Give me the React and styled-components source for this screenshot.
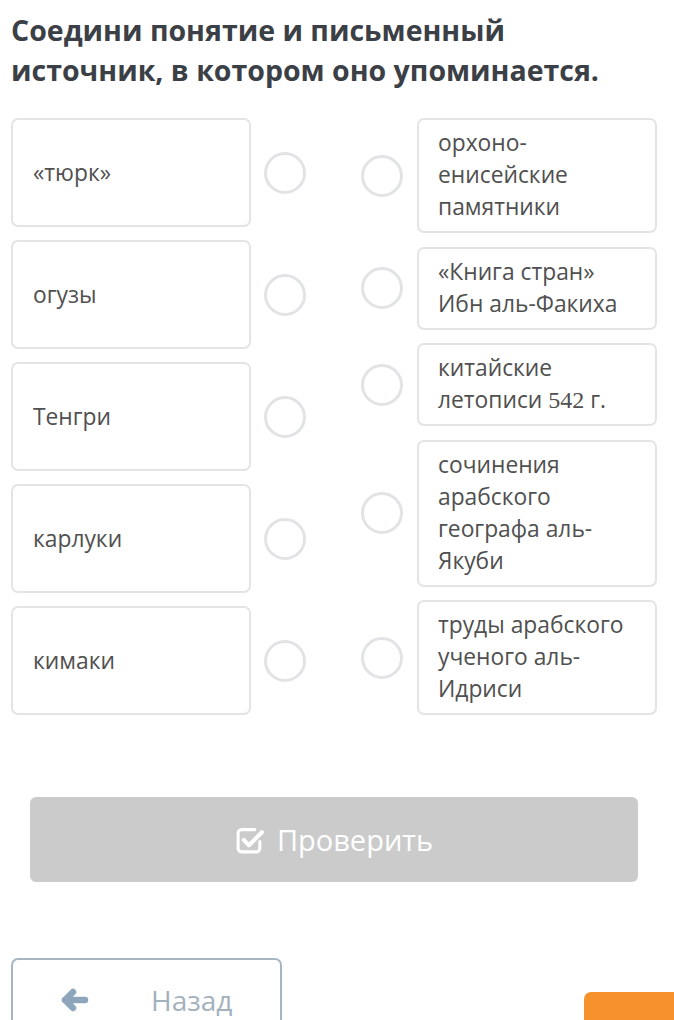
import React from "react";
import styled, { createGlobalStyle } from "styled-components";

const Global = createGlobalStyle`
  html, body { margin: 0; padding: 0; background: #fff; }
  body { font-family: "Open Sans", "Noto Sans", sans-serif; overflow: hidden; }
  * { box-sizing: border-box; }
`;

const Page = styled.div`
  width: 674px;
  height: 1020px;
  padding: 10px 0 0 11px;
  position: relative;
  overflow: hidden;
`;

const Title = styled.h1`
  margin: 0;
  font-size: 28.5px;
  line-height: 40px;
  font-weight: 700;
  color: #3b4046;
`;

const Board = styled.div`
  display: grid;
  grid-template-columns: 295px 296px;
  column-gap: 55px;
  align-items: start;
  margin-top: 28px;
`;

const Column = styled.div`
  display: flex;
  flex-direction: column;
  gap: ${(p) => (p.$right ? "13.5px" : "13px")};
`;

const Row = styled.div`
  display: flex;
  align-items: center;
  gap: ${(p) => (p.$right ? "14px" : "13px")};
`;

const Card = styled.div`
  width: 240px;
  flex: none;
  border: 2px solid #e4e4e4;
  border-radius: 7px;
  background: #fff;
  color: #505050;
  font-size: 22.8px;
  line-height: 32px;
  display: flex;
  align-items: center;
  ${(p) =>
    p.$fixed
      ? `height: 109px; padding: 0 20px;`
      : `padding: 7px 19px 8px 19px;`}
`;

const Dot = styled.div`
  width: 42px;
  height: 42px;
  flex: none;
  border: 3px solid #e1e3e5;
  border-radius: 50%;
  background: #fff;
`;

const Num = styled.span`
  font-family: "Liberation Serif", "DejaVu Serif", serif;
  font-size: 24px;
`;

const CheckButton = styled.button`
  display: flex;
  align-items: center;
  justify-content: center;
  gap: 12px;
  width: 608px;
  height: 85px;
  margin: 82px 0 0 19px;
  border: none;
  border-radius: 6px;
  background: #cbcbcb;
  color: #fff;
  font-family: "Open Sans", sans-serif;
  font-size: 29px;
  padding: 0;
`;

const BottomBar = styled.div`
  display: flex;
  justify-content: space-between;
  align-items: flex-start;
  margin-top: 76px;
`;

const BackButton = styled.button`
  width: 271px;
  height: 80px;
  border: 2px solid #a5b6c3;
  border-radius: 7px;
  background: #fff;
  display: flex;
  align-items: flex-start;
  padding: 22px 0 0 47px;
  gap: 62px;
  color: #a3b1bc;
  font-family: "Open Sans", sans-serif;
  font-size: 28px;
  line-height: 36px;
  svg { margin-top: 6px; }
`;

const NextButton = styled.div`
  width: 90px;
  height: 60px;
  margin-top: 34px;
  background: #f5922c;
  border-radius: 7px 0 0 0;
`;

const CheckIcon = () => (
  <svg width="30" height="28" viewBox="0 0 29 27" fill="none">
    <path
      d="M19 3.5H6.5A3.5 3.5 0 0 0 3 7v14.5A3.5 3.5 0 0 0 6.5 25h14A3.5 3.5 0 0 0 24 21.5V15"
      stroke="#fff"
      strokeWidth="3"
      strokeLinecap="round"
    />
    <path
      d="M8.5 13.5l5 5L26 6"
      stroke="#fff"
      strokeWidth="4"
      strokeLinecap="round"
      strokeLinejoin="round"
    />
  </svg>
);

const ArrowIcon = () => (
  <svg width="29" height="24" viewBox="0 0 29 24" fill="none">
    <path
      d="M5 12H25M13 4L5 12L13 20"
      stroke="#8ea6bb"
      strokeWidth="6.5"
      strokeLinecap="round"
      strokeLinejoin="round"
    />
  </svg>
);

const left = ["«тюрк»", "огузы", "Тенгри", "карлуки", "кимаки"];
const right = [
  <>орхоно-<br />енисейские<br />памятники</>,
  <>«Книга стран»<br />Ибн аль-Факиха</>,
  <>китайские<br />летописи <Num>542</Num> г.</>,
  <>сочинения<br />арабского<br />географа аль-<br />Якуби</>,
  <>труды арабского<br />ученого аль-<br />Идриси</>,
];

export default function App() {
  return (
    <Page>
      <Global />
      <Title>
        Соедини понятие и письменный
        <br />
        источник, в котором оно упоминается.
      </Title>
      <Board>
        <Column>
          {left.map((t) => (
            <Row key={t}>
              <Card $fixed>{t}</Card>
              <Dot />
            </Row>
          ))}
        </Column>
        <Column $right>
          {right.map((t, i) => (
            <Row $right key={i}>
              <Dot />
              <Card>
                <div>{t}</div>
              </Card>
            </Row>
          ))}
        </Column>
      </Board>
      <CheckButton>
        <CheckIcon />
        Проверить
      </CheckButton>
      <BottomBar>
        <BackButton>
          <ArrowIcon />
          Назад
        </BackButton>
        <NextButton />
      </BottomBar>
    </Page>
  );
}
